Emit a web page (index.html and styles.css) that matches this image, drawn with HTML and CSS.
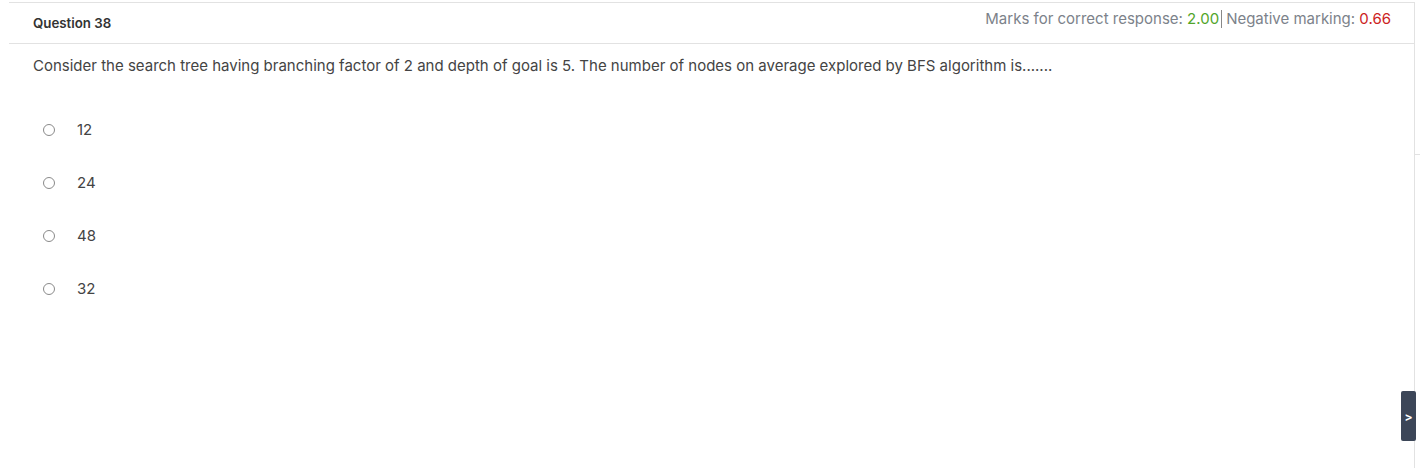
FILE: index.html
```html
<!DOCTYPE html>
<html lang="en">
<head>
  <meta charset="UTF-8" />
  <title>Question 38</title>
  <link rel="stylesheet" href="styles.css">
</head>
<body>

  <div class="page">
    <div class="question-box">
      <div class="question-head">
        <span class="q-title">Question 38</span>
        <span class="marks">Marks for correct response: <span class="pos">2.00</span><span class="sep"></span>Negative marking: <span class="neg">0.66</span></span>
      </div>

      <div class="question-body">
        <p class="q-text">Consider the search tree having branching factor of 2 and depth of goal is 5. The number of nodes on average explored by BFS algorithm is.......</p>

        <ul class="options">
          <li><span class="radio"></span><span class="opt">12</span></li>
          <li><span class="radio"></span><span class="opt">24</span></li>
          <li><span class="radio"></span><span class="opt">48</span></li>
          <li><span class="radio"></span><span class="opt">32</span></li>
        </ul>
      </div>
    </div>
    <div class="side-tick"></div>
  </div>

  <button class="next-btn">&gt;</button>

</body>
</html>
```

FILE: styles.css
```css
body {
  font-family: 'Inter', 'Liberation Sans', sans-serif;
  background-color: #fff;
  margin: 0;
  padding: 0;
  color: #444;
}

.page {
  padding-top: 2px;
  height: 466px;
  position: relative;
  overflow: hidden;
}

.question-box {
  margin-left: 9px;
  width: 1406px;
  height: 466px;
  border-top: 1px solid #e2e2e2;
  border-right: 1px solid #e2e2e2;
  box-sizing: border-box;
}

.question-head {
  display: flex;
  justify-content: space-between;
  align-items: flex-start;
  height: 40px;
  padding: 0 23px 0 24px;
  border-bottom: 1px solid #e2e2e2;
}

.q-title {
  font-size: 13.3px;
  font-weight: 600;
  color: #333;
  margin-top: 12px;
}

.marks {
  font-size: 15px;
  color: #7c828a;
  margin-top: 6px;
  white-space: nowrap;
}

.marks .pos {
  color: #52a52a;
}

.marks .neg {
  color: #cc2222;
}

.marks .sep {
  display: inline-block;
  width: 1px;
  height: 18px;
  background: #888;
  margin: 0 4px 0 2px;
  vertical-align: -4px;
}

.question-body {
  padding: 0 24px;
}

.q-text {
  font-size: 15px;
  color: #444;
  margin: 12px 0 0 0;
}

.options {
  list-style: none;
  margin: 28px 0 0 0;
  padding: 0;
}

.options li {
  display: flex;
  align-items: center;
  height: 53px;
}

.radio {
  width: 10px;
  height: 10px;
  border: 1px solid #8a8a8a;
  border-radius: 50%;
  margin-left: 10px;
}

.opt {
  font-size: 15px;
  color: #444;
  margin-left: 22px;
}

.side-tick {
  position: absolute;
  right: 0;
  top: 154px;
  width: 5px;
  height: 1px;
  background: #e2e2e2;
}

.next-btn {
  position: fixed;
  left: 1401px;
  top: 391px;
  width: 15px;
  height: 50px;
  padding: 0;
  border: none;
  border-radius: 2px;
  background: #3c4658;
  color: #fff;
  font-weight: bold;
  font-size: 12px;
  font-family: 'Inter', sans-serif;
  cursor: pointer;
}
```
